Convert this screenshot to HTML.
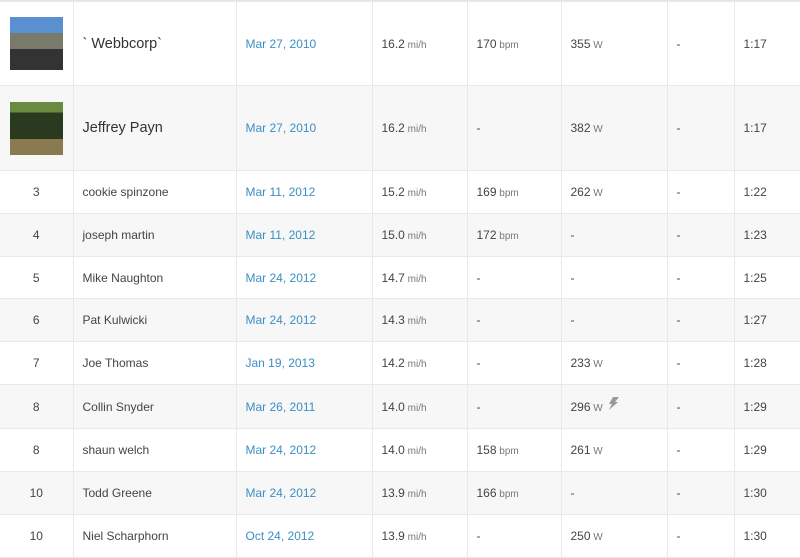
<!DOCTYPE html><html><head><style>
body{margin:0;width:800px;height:549px;overflow:hidden;background:#fff;font-family:"Liberation Sans",sans-serif;color:#444;font-size:12px}
table{border-collapse:collapse;table-layout:fixed;width:801px;position:absolute;top:1px;left:0}
td{border:1px solid #e9e9e9;padding:0 0 0 9px;white-space:nowrap;vertical-align:middle;line-height:14px}
td:first-child{border-left:none;text-align:center;padding:0}
tr:nth-child(even) td{background:#f7f7f7}
.d{color:#3a8fc4}
.u{font-size:10px;color:#777;line-height:0}
.big{font-size:14.5px;color:#333}
.ph{display:inline-block;width:53px;height:53px;vertical-align:middle}
.r{position:relative}
</style></head><body>
<div style="position:absolute;top:0;left:0;width:800px;height:1px;background:#e4e4e4"></div>
<table>
<colgroup><col style="width:73px"><col style="width:163px"><col style="width:136px"><col style="width:95px"><col style="width:94px"><col style="width:106px"><col style="width:67px"><col style="width:67px"></colgroup>
<tr style="height:84px"><td><span class="ph" style="background:linear-gradient(#5a8fd0 0 30%,#7a7a6a 30% 60%,#333 60%)"></span></td><td class="big">` Webbcorp`</td><td class="d">Mar 27, 2010</td><td>16.2<span class="u"> mi/h</span></td><td>170<span class="u"> bpm</span></td><td>355<span class="u"> W</span></td><td>-</td><td>1:17</td></tr>
<tr style="height:85px"><td><span class="ph" style="background:linear-gradient(#6a8a40 0 20%,#2a3a20 20% 70%,#8a7a50 70%)"></span></td><td class="big">Jeffrey Payn</td><td class="d">Mar 27, 2010</td><td>16.2<span class="u"> mi/h</span></td><td>-</td><td>382<span class="u"> W</span></td><td>-</td><td>1:17</td></tr>
<tr style="height:43px"><td>3</td><td>cookie spinzone</td><td class="d">Mar 11, 2012</td><td>15.2<span class="u"> mi/h</span></td><td>169<span class="u"> bpm</span></td><td>262<span class="u"> W</span></td><td>-</td><td>1:22</td></tr>
<tr style="height:43px"><td>4</td><td>joseph martin</td><td class="d">Mar 11, 2012</td><td>15.0<span class="u"> mi/h</span></td><td>172<span class="u"> bpm</span></td><td>-</td><td>-</td><td>1:23</td></tr>
<tr style="height:42px"><td>5</td><td>Mike Naughton</td><td class="d">Mar 24, 2012</td><td>14.7<span class="u"> mi/h</span></td><td>-</td><td>-</td><td>-</td><td>1:25</td></tr>
<tr style="height:43px"><td>6</td><td>Pat Kulwicki</td><td class="d">Mar 24, 2012</td><td>14.3<span class="u"> mi/h</span></td><td>-</td><td>-</td><td>-</td><td>1:27</td></tr>
<tr style="height:43px"><td>7</td><td>Joe Thomas</td><td class="d">Jan 19, 2013</td><td>14.2<span class="u"> mi/h</span></td><td>-</td><td>233<span class="u"> W</span></td><td>-</td><td>1:28</td></tr>
<tr style="height:44px"><td>8</td><td>Collin Snyder</td><td class="d">Mar 26, 2011</td><td>14.0<span class="u"> mi/h</span></td><td>-</td><td class="r">296<span class="u"> W</span><svg width="14" height="14" viewBox="0 0 14 14" style="position:absolute;left:44px;top:12px"><path d="M7 0L13 0L9 5L12 5L3 13L6 7L3 7Z" fill="#999"/></svg></td><td>-</td><td>1:29</td></tr>
<tr style="height:43px"><td>8</td><td>shaun welch</td><td class="d">Mar 24, 2012</td><td>14.0<span class="u"> mi/h</span></td><td>158<span class="u"> bpm</span></td><td>261<span class="u"> W</span></td><td>-</td><td>1:29</td></tr>
<tr style="height:43px"><td>10</td><td>Todd Greene</td><td class="d">Mar 24, 2012</td><td>13.9<span class="u"> mi/h</span></td><td>166<span class="u"> bpm</span></td><td>-</td><td>-</td><td>1:30</td></tr>
<tr style="height:43px"><td>10</td><td>Niel Scharphorn</td><td class="d">Oct 24, 2012</td><td>13.9<span class="u"> mi/h</span></td><td>-</td><td>250<span class="u"> W</span></td><td>-</td><td>1:30</td></tr>
</table>
</body></html>
